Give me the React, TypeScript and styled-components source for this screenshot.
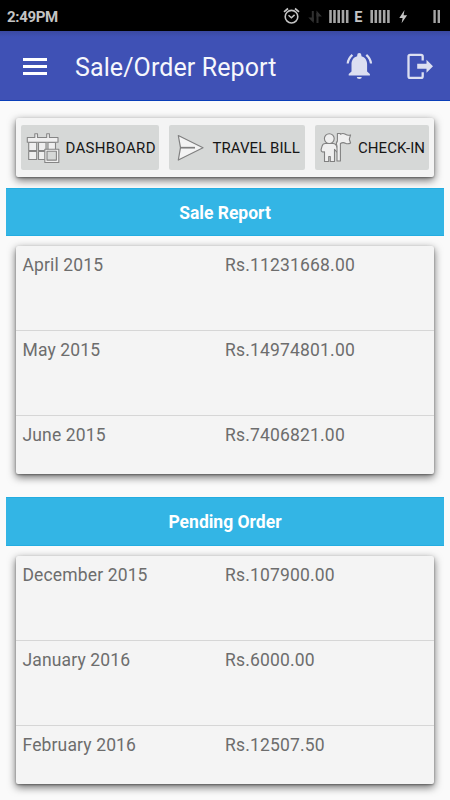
import React from "react";
import styled, { createGlobalStyle } from "styled-components";

const GlobalStyle = createGlobalStyle`
  * { box-sizing: border-box; }
  body { margin: 0; background: #fafafa; font-family: Roboto, "Liberation Sans", sans-serif; }
  svg { display: block; flex: none; }
`;

const Screen = styled.div`
  width: 450px;
  height: 800px;
  overflow: hidden;
  background: #fafafa;
`;

const StatusBar = styled.header`
  height: 31px;
  background: #000;
  display: flex;
  align-items: center;
  justify-content: space-between;
  padding: 2px 9px 0 7px;
  color: #c4c4c4;
`;

const Clock = styled.span`
  font-size: 15px;
  font-weight: 700;
  line-height: 20px;
  letter-spacing: -0.32px;
`;

const AppBar = styled.div`
  height: 70px;
  display: flex;
  align-items: center;
  padding: 1px 16px 0 23px;
  background: linear-gradient(#3a48a0 0, #3f51b5 6px);
  border-bottom: 1px solid #0b3fb8;
`;

const MenuButton = styled.button`
  width: 24px;
  height: 17px;
  padding: 0;
  border: 0;
  background: none;
  display: flex;
  flex-direction: column;
  justify-content: space-between;
`;

const MenuLine = styled.span`
  width: 24px;
  height: 3px;
  background: #fff;
`;

const Title = styled.h1`
  flex: 1;
  margin: 0 0 0 28px;
  padding-top: 3px;
  font-size: 25px;
  font-weight: 400;
  line-height: 32px;
  letter-spacing: 0.1px;
  white-space: nowrap;
  color: #f6f7fc;
`;

const BarActions = styled.div`
  display: flex;
  align-items: center;
  gap: 33px;
`;

const Surface = styled.section`
  margin: 0 16px;
  background: #f4f4f4;
  border-radius: 2px;
  box-shadow: 0 3px 8px rgba(0, 0, 0, 0.6), 0 1px 2px rgba(0, 0, 0, 0.32);
`;

const Toolbar = styled(Surface)`
  margin-top: 17px;
  height: 59px;
  padding: 7px 5px;
  display: flex;
  gap: 10px;
`;

const ToolButton = styled.button<{ $width: number; $pad: number; $gap: number; $track: number }>`
  flex: none;
  width: ${(p) => p.$width}px;
  height: 45px;
  padding: 0 0 0 ${(p) => p.$pad}px;
  display: flex;
  align-items: center;
  gap: ${(p) => p.$gap}px;
  border: 0;
  border-radius: 2px;
  background: #d6d8d7;
  color: #161616;
  font: 400 15px/20px Roboto, sans-serif;
  letter-spacing: ${(p) => p.$track}px;
  white-space: nowrap;
`;

const SectionTitle = styled.h2<{ $top: number }>`
  margin: ${(p) => p.$top}px 6px 10px;
  height: 48.5px;
  display: flex;
  align-items: center;
  justify-content: center;
  padding-top: 2px;
  background: #33b5e5;
  border: solid #24ade1;
  border-width: 1px 0;
  color: #fff;
  font-size: 17.5px;
  font-weight: 700;
  line-height: 22px;
`;

const Rows = styled(Surface)`
  height: 228px;
`;

const Row = styled.div`
  height: 85px;
  padding: 8px 7px 0 6.5px;
  display: grid;
  grid-template-columns: 202.5px 1fr;
  font-size: 17.5px;
  line-height: 22px;
  letter-spacing: 0.14px;
  color: #6d6d6d;

  &:not(:last-child) { border-bottom: 1px solid #d6d6d6; }
  &:last-child { height: 58px; }
`;

const Amount = styled.span`
  letter-spacing: 0.18px;
`;

const StatusIcons = () => (
  <svg width="160" height="22" viewBox="281 5 160 22" fill="none" stroke="#c4c4c4">
    <circle cx="291.5" cy="15.7" r="6.3" strokeWidth="1.6" />
    <path d="M288.5 14.2l2.9 2.5 3.2-2.8" strokeWidth="1.5" />
    <path d="M284 10.8l4-3.3M299 10.8l-4-3.3" strokeWidth="1.7" />
    <path d="M312.8 10v10M317.5 12v10" stroke="#303030" strokeWidth="2" />
    <path d="M308.3 16.5h5.4v5.5zM316.5 9.5v6h5.4z" fill="#303030" stroke="none" />
    <path d="M330.5 9v13M334.5 9v13M338.7 9v13M343 9v13M347.2 9v13" stroke="#a6a6a6" strokeWidth="2.6" />
    <text x="354.2" y="21" fill="#c4c4c4" stroke="none" fontSize="14.5" fontWeight="700" fontFamily="Roboto, sans-serif">E</text>
    <path d="M371.7 9v13M375.8 9v13M380 9v13M384.2 9v13M388.4 9v13" stroke="#a6a6a6" strokeWidth="2.6" />
    <path d="M404.5 9l-5.2 8h3.3l-1 5.2 5.5-8h-3.5z" fill="#c4c4c4" stroke="none" />
    <path d="M434.6 9v13M438.8 9v13" stroke="#a6a6a6" strokeWidth="2.4" />
  </svg>
);

const BellIcon = () => (
  <svg width="28" height="28" viewBox="345 52 28 28">
    <path d="M348.7 75.5v-1.4l2.8-2.7v-7.1c0-4.2 2.1-7.2 5.7-8.1v-1a2.1 2.1 0 0 1 4.2 0v1c3.6.9 5.7 3.9 5.7 8.1v7.1l2.8 2.7v1.4zM356.8 77h5a2.5 2 0 0 1-5 0z" fill="#dcdff1" />
    <path d="M352.4 54.8q-4.3 3.7-4.7 8.7M366.3 54.8q4.3 3.7 4.7 8.7" fill="none" stroke="#dcdff1" strokeWidth="2.2" />
  </svg>
);

const ExitIcon = () => (
  <svg width="28" height="28" viewBox="406 52 28 28">
    <path d="M422.7 60.5v-4q0-1.7-1.7-1.7h-10.8q-1.7 0-1.7 1.7v19.7q0 1.7 1.7 1.7H421q1.7 0 1.7-1.7v-4" fill="none" stroke="#dcdff1" strokeWidth="2.3" />
    <path d="M417.2 63.7h9.3v-4l6.5 6.5-6.5 6.5v-4h-9.3z" fill="#dcdff1" />
  </svg>
);

const CalendarIcon = () => (
  <svg width="34" height="32" viewBox="26 132 34 32" fill="#efefef" stroke="#858585" strokeWidth="1.1" strokeLinejoin="round">
    <rect x="28.7" y="142.5" width="8" height="8" />
    <rect x="38.5" y="142.5" width="7.5" height="8" />
    <rect x="48" y="142.5" width="7.5" height="8" />
    <rect x="28.7" y="151.5" width="8" height="8" />
    <rect x="38.5" y="151.5" width="7.5" height="8" />
    <path d="M27.3 137.5h7.5v-3.8h2.7v3.8h9.2v-3.8h2.7v3.8H58v4.8H27.3z" />
    <path d="M44.8 149.2h14v13.3h-14z" />
    <path d="M47 151.3h9.4v8.8H47z" fill="#d6d8d7" />
  </svg>
);

const PlaneIcon = () => (
  <svg width="28" height="28" viewBox="176 134 28 28" fill="#f4f4f4" stroke="#808080" strokeWidth="1.2" strokeLinejoin="round">
    <path d="M178.3 135.5l24.7 12.2-24.7 12.3 2.2-12.3z" />
    <path d="M180.5 147.7H195" strokeWidth="1.7" />
  </svg>
);

const PersonFlagIcon = () => (
  <svg width="32" height="32" viewBox="320 132 32 32" fill="#efefef" stroke="#808080" strokeWidth="1.1" strokeLinejoin="round">
    <path d="M325.3 143.5h8q2 0 3 2l2.2 4.8-1.7 1.7-2.3-2.7v12.2h-4.2v-5h-1.6v5h-4.2v-9.8l-2 .3q-1.6-.6-1.4-2.3l.9-3.4q.8-2.8 3.3-2.8z" />
    <circle cx="329.3" cy="138.6" r="4.9" />
    <path d="M337.4 133.5h3v.8q2.5-1.6 5 0t5.2.6l-1.3 4.3 1.3 3.8q-2.7 1.5-5.2.2t-5 .3v17.5h-3.4v-14.8q-1.4-3.3.4-5.2z" />
  </svg>
);

type Entry = { month: string; amount: string };

const sales: Entry[] = [
  { month: "April 2015", amount: "Rs.11231668.00" },
  { month: "May 2015", amount: "Rs.14974801.00" },
  { month: "June 2015", amount: "Rs.7406821.00" },
];

const orders: Entry[] = [
  { month: "December 2015", amount: "Rs.107900.00" },
  { month: "January 2016", amount: "Rs.6000.00" },
  { month: "February 2016", amount: "Rs.12507.50" },
];

const Report = ({ entries }: { entries: Entry[] }) => (
  <Rows>
    {entries.map((e) => (
      <Row key={e.month}>
        <span>{e.month}</span>
        <Amount>{e.amount}</Amount>
      </Row>
    ))}
  </Rows>
);

export default function App() {
  return (
    <Screen>
      <GlobalStyle />
      <StatusBar>
        <Clock>2:49PM</Clock>
        <StatusIcons />
      </StatusBar>
      <AppBar>
        <MenuButton aria-label="Menu">
          <MenuLine />
          <MenuLine />
          <MenuLine />
        </MenuButton>
        <Title>Sale/Order Report</Title>
        <BarActions>
          <BellIcon />
          <ExitIcon />
        </BarActions>
      </AppBar>
      <Toolbar>
        <ToolButton $width={138} $pad={5} $gap={5.5} $track={0.32}><CalendarIcon />DASHBOARD</ToolButton>
        <ToolButton $width={135.5} $pad={7} $gap={8.5} $track={0.05}><PlaneIcon />TRAVEL BILL</ToolButton>
        <ToolButton $width={114.5} $pad={5} $gap={6.5} $track={0.05}><PersonFlagIcon />CHECK-IN</ToolButton>
      </Toolbar>
      <SectionTitle $top={10.5}>Sale Report</SectionTitle>
      <Report entries={sales} />
      <SectionTitle $top={23}>Pending Order</SectionTitle>
      <Report entries={orders} />
    </Screen>
  );
}
